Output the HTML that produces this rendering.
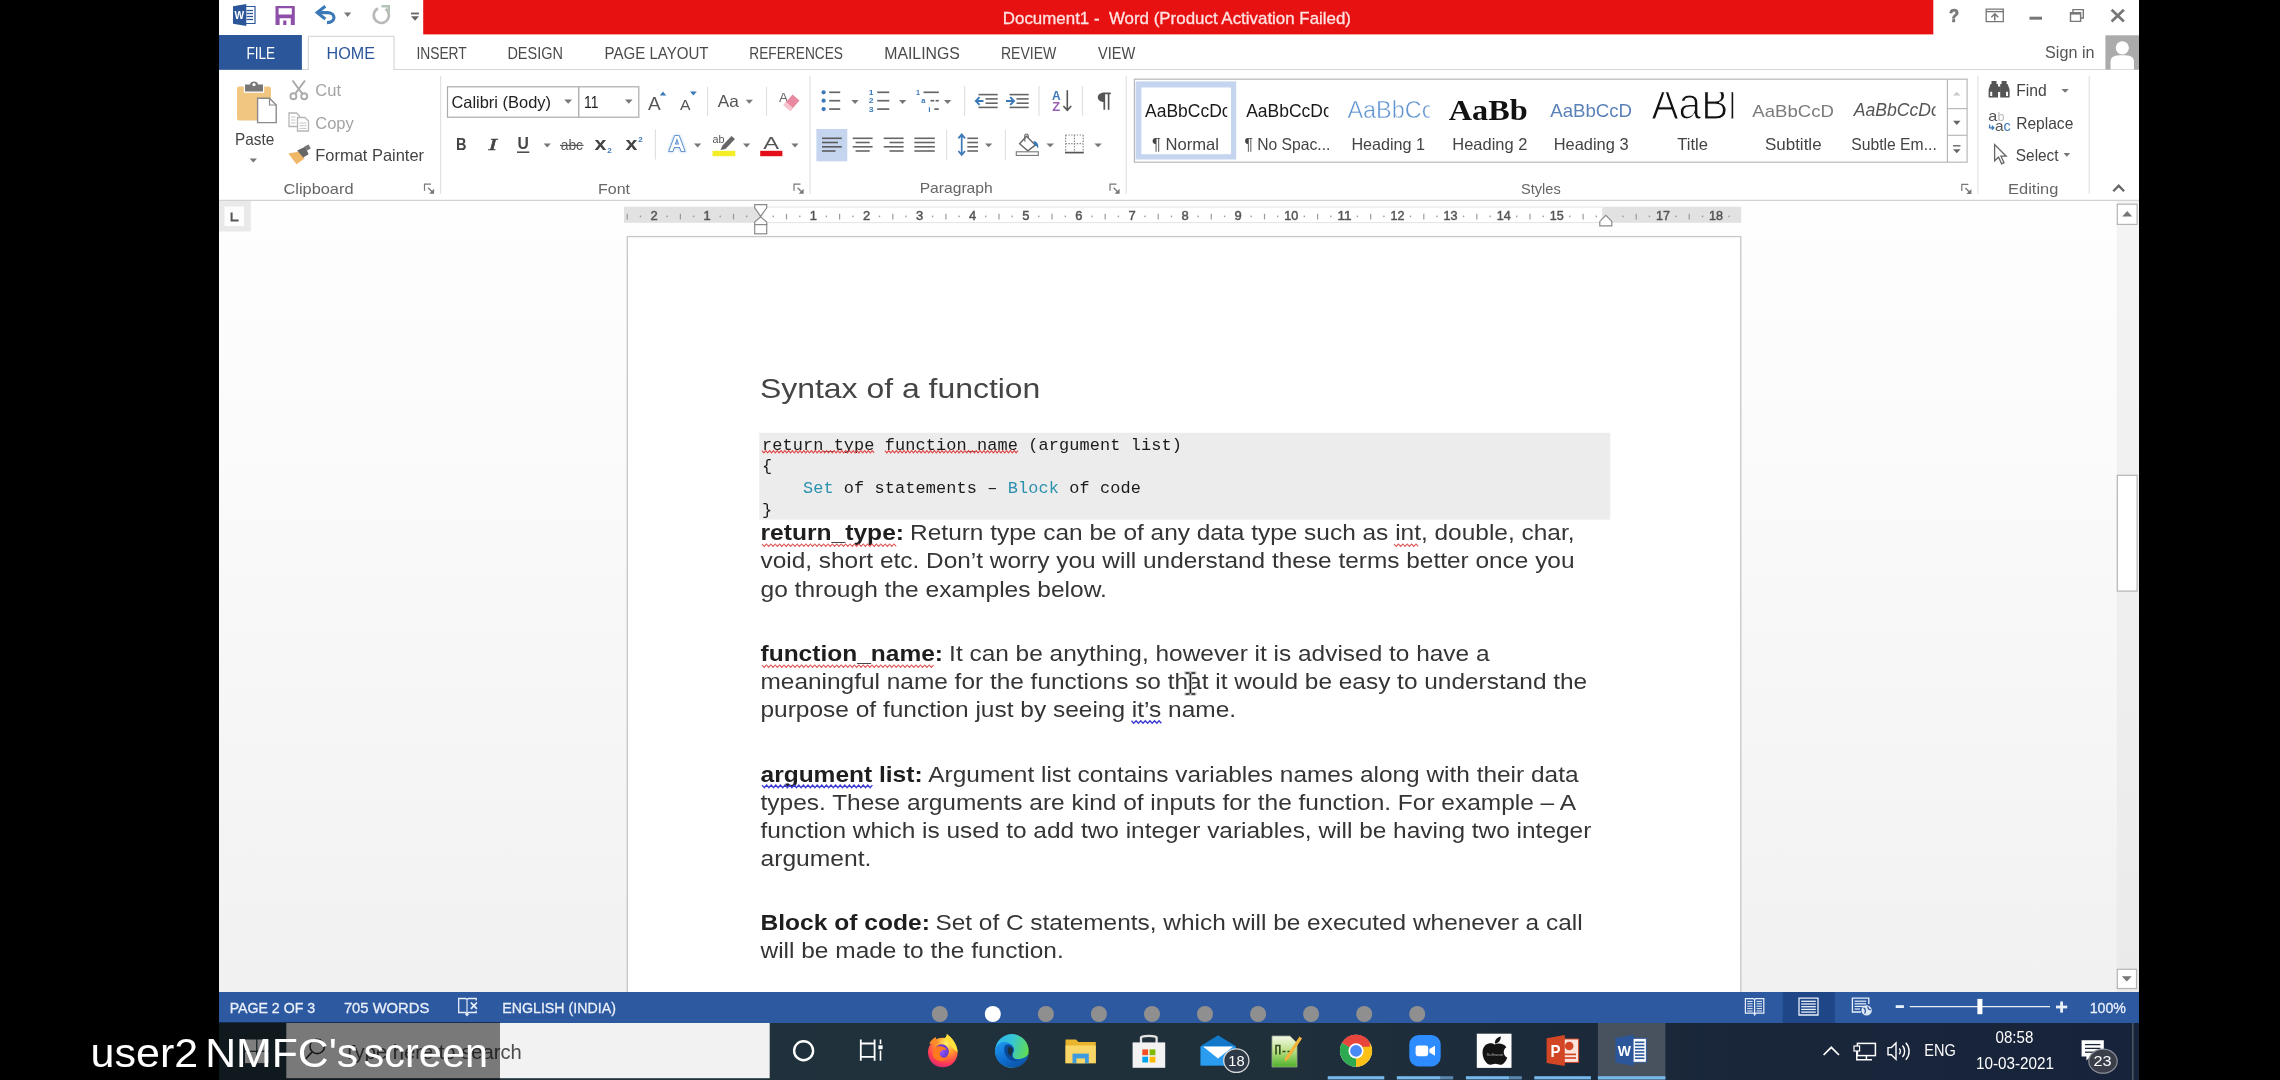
<!DOCTYPE html>
<html lang="en"><head><meta charset="utf-8"><title>Document1 - Word</title>
<style>
html,body{margin:0;padding:0;background:#000;}
body{width:2280px;height:1080px;position:relative;overflow:hidden;font-family:"Liberation Sans", sans-serif;}
.region{position:absolute;overflow:hidden;}
.region svg{display:block;position:absolute;left:0;top:0;}
svg text{font-family:"Liberation Sans", sans-serif;white-space:pre;}
</style></head><body>
<div class="region titlebar" style="left:219px;top:0px;width:1920px;height:35px;background:#fff;"><svg width="1920" height="35" viewBox="219 0 1920 35"><g opacity="0.999"><rect x="423.2" y="0.0" width="1510.1" height="34.4" fill="#e81111" />
<text x="1002.8" y="23.6" font-size="17" fill="#ffe2e2" textLength="348.2" lengthAdjust="spacingAndGlyphs" stroke="#ffe2e2" stroke-width="0.3">Document1 -  Word (Product Activation Failed)</text>
<g>
<path d="M243 6.5 H255 V23.5 H243 Z" fill="#fff" stroke="#2b579a" stroke-width="1.2" />
<line x1="246.5" y1="10.5" x2="253.0" y2="10.5" stroke="#2b579a" stroke-width="1.3" />
<line x1="246.5" y1="13.5" x2="253.0" y2="13.5" stroke="#2b579a" stroke-width="1.3" />
<line x1="246.5" y1="16.5" x2="253.0" y2="16.5" stroke="#2b579a" stroke-width="1.3" />
<line x1="246.5" y1="19.5" x2="253.0" y2="19.5" stroke="#2b579a" stroke-width="1.3" />
<path d="M233 6.3 L246.3 4 V26 L233 23.7 Z" fill="#2b579a" />
<text x="234.6" y="19.3" font-size="10.5" fill="#fff" textLength="9.6" lengthAdjust="spacingAndGlyphs" font-weight="bold">W</text>
</g>
<path d="M275.5 6 H294.8 V25 H275.5 Z M278.6 8.2 V14.6 H291.8 V8.2 Z M279.6 18.3 V25 H290.8 V18.3 Z M283.2 20.6 H286.4 V25 H283.2 Z" fill="#8e4fa8" fill-rule="evenodd"/>
<path d="M325.3 6.2 L317.2 12.6 L325.3 19" fill="none" stroke="#3b78b8" stroke-width="3.1" stroke-linejoin="miter"/>
<path d="M318.5 12.6 H327.5 C336 12.6 336.5 22.5 327 22.6" fill="none" stroke="#3b78b8" stroke-width="3.1" />
<polygon points="344.0,12.5 351.2,12.5 347.6,16.9" fill="#777"/>
<path d="M378 8.5 A7.6 7.6 0 1 0 385.5 9" fill="none" stroke="#b9b9b9" stroke-width="2.6" />
<path d="M381.5 6.3 H388.7 V13.8" fill="none" stroke="#b3c4b6" stroke-width="2.6" />
<rect x="411.0" y="12.6" width="8.0" height="1.8" fill="#666" />
<polygon points="411.0,16.2 419.0,16.2 415.0,20.7" fill="#666"/>
<text x="1949.0" y="22.2" font-size="18.5" fill="#777" textLength="10.1" lengthAdjust="spacingAndGlyphs" font-weight="bold" stroke="#777" stroke-width="0.7">?</text>
<path d="M1986.2 9.2 H2003.3 V21.6 H1986.2 Z" fill="none" stroke="#777" stroke-width="1.3" />
<line x1="1986.2" y1="11.6" x2="2003.3" y2="11.6" stroke="#777" stroke-width="1.4" />
<path d="M1994.8 20.5 V14.4 M1991.3 17.2 L1994.8 13.9 L1998.3 17.2" fill="none" stroke="#777" stroke-width="1.5" />
<rect x="2029.5" y="16.7" width="12.5" height="3.0" fill="#777" />
<path d="M2073 12 V9.6 H2083.3 V18 H2080.8" fill="none" stroke="#777" stroke-width="1.4" />
<path d="M2070.5 12.6 H2080.6 V21.4 H2070.5 Z" fill="none" stroke="#777" stroke-width="1.4" />
<line x1="2070.5" y1="13.6" x2="2080.6" y2="13.6" stroke="#777" stroke-width="2" />
<path d="M2111.6 9.8 L2123.9 21.4 M2123.9 9.8 L2111.6 21.4" fill="none" stroke="#777" stroke-width="2.7" /></g></svg></div>
<div class="region tabs" style="left:219px;top:35px;width:1920px;height:35px;background:#fff;"><svg width="1920" height="35" viewBox="219 35 1920 35"><g opacity="0.999"><line x1="219.0" y1="69.5" x2="2139.0" y2="69.5" stroke="#d6d6d6" stroke-width="1" />
<rect x="219.0" y="35.0" width="82.9" height="34.8" fill="#2b579a" />
<text x="246.4" y="58.7" font-size="17" fill="#fff" textLength="28.6" lengthAdjust="spacingAndGlyphs">FILE</text>
<path d="M308.3 70.5 V36.3 H394 V70.5" fill="#fff" stroke="#d0d0d0" stroke-width="1" />
<text x="326.5" y="58.7" font-size="17" fill="#2b579a" textLength="48.5" lengthAdjust="spacingAndGlyphs">HOME</text>
<text x="416.4" y="58.7" font-size="17" fill="#4a4a4a" textLength="50.4" lengthAdjust="spacingAndGlyphs">INSERT</text>
<text x="507.4" y="58.7" font-size="17" fill="#4a4a4a" textLength="55.5" lengthAdjust="spacingAndGlyphs">DESIGN</text>
<text x="604.5" y="58.7" font-size="17" fill="#4a4a4a" textLength="104.0" lengthAdjust="spacingAndGlyphs">PAGE LAYOUT</text>
<text x="749.3" y="58.7" font-size="17" fill="#4a4a4a" textLength="93.7" lengthAdjust="spacingAndGlyphs">REFERENCES</text>
<text x="884.2" y="58.7" font-size="17" fill="#4a4a4a" textLength="75.7" lengthAdjust="spacingAndGlyphs">MAILINGS</text>
<text x="1000.9" y="58.7" font-size="17" fill="#4a4a4a" textLength="55.5" lengthAdjust="spacingAndGlyphs">REVIEW</text>
<text x="1098.0" y="58.7" font-size="17" fill="#4a4a4a" textLength="37.3" lengthAdjust="spacingAndGlyphs">VIEW</text>
<text x="2045.1" y="57.5" font-size="17" fill="#555" textLength="49.4" lengthAdjust="spacingAndGlyphs">Sign in</text>
<rect x="2105.4" y="35.3" width="33.6" height="34.3" fill="#ababab" />
<circle cx="2122.3" cy="47.8" r="6.6" fill="#fff"/>
<path d="M2110.5 69.6 V62 C2110.5 56 2115 55.2 2122.3 55.2 C2129.6 55.2 2134 56 2134 62 V69.6 Z" fill="#fff" /></g></svg></div>
<div class="region ribbon" style="left:219px;top:70px;width:1920px;height:131px;background:#fff;"><svg width="1920" height="131" viewBox="219 70 1920 131"><g opacity="0.999"><rect x="237.0" y="86.5" width="34.0" height="34.0" fill="#f0c680" rx="2.2"/>
<path d="M243.8 86 H264.2 V92.8 H243.8 Z" fill="#fff" />
<path d="M245 87.5 V84.5 H250 C250 80.5 258 80.5 258 84.5 H263 V91.5 H245 Z" fill="#777" />
<circle cx="254" cy="84.6" r="1.6" fill="#fff"/>
<path d="M257.6 98.3 H269.5 L276.2 105 V122.6 H257.6 Z" fill="#fff" stroke="#8a8a8a" stroke-width="1.4" />
<path d="M269.5 98.3 V105 H276.2" fill="none" stroke="#8a8a8a" stroke-width="1.2" />
<text x="235.0" y="144.6" font-size="16.5" fill="#444" textLength="39.3" lengthAdjust="spacingAndGlyphs">Paste</text>
<polygon points="249.6,158.6 257.0,158.6 253.3,162.6" fill="#777"/>
<path d="M292.5 80.5 L302.5 94 M305 80.5 L295 94" fill="none" stroke="#ababab" stroke-width="2.1" />
<circle cx="293.4" cy="96.2" r="3" fill="none" stroke="#ababab" stroke-width="1.9"/>
<circle cx="304.2" cy="96.2" r="3" fill="none" stroke="#ababab" stroke-width="1.9"/>
<text x="315.3" y="96.4" font-size="16.5" fill="#a3a3a3" textLength="25.7" lengthAdjust="spacingAndGlyphs">Cut</text>
<path d="M289 113 H296.5 L299.5 116 V126.5 H289 Z" fill="#fff" stroke="#b5b5b5" stroke-width="1.3" />
<path d="M297.5 117.5 H305 L308.5 121 V131 H297.5 Z" fill="#fff" stroke="#b5b5b5" stroke-width="1.3" />
<line x1="291.0" y1="117.0" x2="295.5" y2="117.0" stroke="#c4c4c4" stroke-width="1" />
<line x1="291.0" y1="120.0" x2="295.5" y2="120.0" stroke="#c4c4c4" stroke-width="1" />
<line x1="291.0" y1="123.0" x2="295.5" y2="123.0" stroke="#c4c4c4" stroke-width="1" />
<line x1="299.5" y1="123.0" x2="306.5" y2="123.0" stroke="#c4c4c4" stroke-width="1" />
<line x1="299.5" y1="125.7" x2="306.5" y2="125.7" stroke="#c4c4c4" stroke-width="1" />
<line x1="299.5" y1="128.4" x2="306.5" y2="128.4" stroke="#c4c4c4" stroke-width="1" />
<text x="315.3" y="129.0" font-size="16.5" fill="#a3a3a3" textLength="38.5" lengthAdjust="spacingAndGlyphs">Copy</text>
<path d="M288.3 153.6 L299.5 151.4 L304.6 158.4 L296.6 164.2 Z" fill="#efb766" />
<path d="M297.2 150.4 L305.2 146.8 L308.6 154.2 L303.2 157.6 Z" fill="#666" />
<path d="M304.4 146.6 L308.6 144.4 L310.8 148.6 L306.6 150.8 Z" fill="#777" />
<text x="315.3" y="160.8" font-size="16.5" fill="#444" textLength="108.7" lengthAdjust="spacingAndGlyphs">Format Painter</text>
<text x="283.5" y="193.6" font-size="15" fill="#666" textLength="70.0" lengthAdjust="spacingAndGlyphs">Clipboard</text>
<path d="M424.5 190.7 V184.2 H431.0" fill="none" stroke="#777" stroke-width="1.2" /><path d="M428.1 187.79999999999998 L433.1 192.79999999999998" fill="none" stroke="#777" stroke-width="1.3" /><path d="M434.1 188.79999999999998 V193.79999999999998 H429.1 Z" fill="#777" />
<line x1="440.6" y1="76.0" x2="440.6" y2="193.7" stroke="#e1e1e1" stroke-width="1.2" />
<rect x="447.5" y="86.8" width="131.3" height="30.4" fill="#fff" stroke="#ababab" stroke-width="1.2"/>
<rect x="578.8" y="86.8" width="60.0" height="30.4" fill="#fff" stroke="#ababab" stroke-width="1.2"/>
<text x="451.4" y="107.7" font-size="16.5" fill="#222" textLength="99.6" lengthAdjust="spacingAndGlyphs">Calibri (Body)</text>
<polygon points="564.2,99.6 572.1,99.6 568.2,103.8" fill="#777"/>
<text x="584.0" y="107.7" font-size="16.5" fill="#222" textLength="14.4" lengthAdjust="spacingAndGlyphs">11</text>
<polygon points="625.0,99.6 632.6,99.6 628.8,103.8" fill="#777"/>
<text x="648.0" y="109.5" font-size="19" fill="#555" textLength="12.7" lengthAdjust="spacingAndGlyphs">A</text>
<polygon points="659.8,95.4 666.2,95.4 663.0,91.4" fill="#3b78b8"/>
<text x="680.0" y="109.5" font-size="15" fill="#555" textLength="10.5" lengthAdjust="spacingAndGlyphs">A</text>
<polygon points="690.0,91.4 696.8,91.4 693.4,95.4" fill="#3b78b8"/>
<line x1="707.5" y1="86.7" x2="707.5" y2="116.0" stroke="#e1e1e1" stroke-width="1.2" />
<text x="717.7" y="106.5" font-size="16.5" fill="#555" textLength="21.1" lengthAdjust="spacingAndGlyphs">Aa</text>
<polygon points="745.8,99.8 752.9,99.8 749.3,103.8" fill="#777"/>
<line x1="766.5" y1="86.7" x2="766.5" y2="116.0" stroke="#e1e1e1" stroke-width="1.2" />
<text x="779.0" y="101.5" font-size="13.5" fill="#666" textLength="9.0" lengthAdjust="spacingAndGlyphs">A</text>
<path d="M792.5 94.5 L799.5 100.5 L790.5 111 L783.5 105 Z" fill="#e889a0" />
<path d="M783.5 105 L786.2 102 L793.2 108 L790.5 111 Z" fill="#f7c5d0" />
<text x="456.0" y="149.8" font-size="16.5" fill="#444" textLength="10.5" lengthAdjust="spacingAndGlyphs" font-weight="bold">B</text>
<text x="488.4" y="149.8" font-size="17.5" fill="#444" textLength="8.4" lengthAdjust="spacingAndGlyphs" style='font-family:"Liberation Serif", serif' font-style="italic" stroke="#444" stroke-width="0.5">I</text>
<text x="517.5" y="149.3" font-size="16" fill="#444" textLength="11.3" lengthAdjust="spacingAndGlyphs" font-weight="bold">U</text>
<line x1="517.0" y1="152.2" x2="529.3" y2="152.2" stroke="#444" stroke-width="1.5" />
<polygon points="543.7,143.6 550.8,143.6 547.2,147.4" fill="#777"/>
<text x="560.7" y="149.8" font-size="14.5" fill="#555" textLength="22.3" lengthAdjust="spacingAndGlyphs">abc</text>
<line x1="560.0" y1="145.4" x2="583.6" y2="145.4" stroke="#555" stroke-width="1.2" />
<text x="594.6" y="149.8" font-size="18" fill="#444" textLength="11.9" lengthAdjust="spacingAndGlyphs" font-weight="bold">x</text>
<text x="607.3" y="153.4" font-size="8" fill="#3b78b8" textLength="4.5" lengthAdjust="spacingAndGlyphs" font-weight="bold">2</text>
<text x="625.6" y="149.8" font-size="18" fill="#444" textLength="11.9" lengthAdjust="spacingAndGlyphs" font-weight="bold">x</text>
<text x="638.3" y="142.3" font-size="8" fill="#3b78b8" textLength="4.5" lengthAdjust="spacingAndGlyphs" font-weight="bold">2</text>
<line x1="655.4" y1="129.6" x2="655.4" y2="159.5" stroke="#e1e1e1" stroke-width="1.2" />
<text x="668.8" y="151.3" font-size="22.5" fill="#fff" textLength="16.4" lengthAdjust="spacingAndGlyphs" font-weight="bold" stroke="#4a86c8" stroke-width="1.6" paint-order="stroke" style="filter:drop-shadow(0 0 1.5px #9cc0ea)">A</text>
<polygon points="694.0,143.6 701.2,143.6 697.6,147.4" fill="#777"/>
<text x="712.5" y="143.2" font-size="11.5" fill="#555" textLength="12.0" lengthAdjust="spacingAndGlyphs">ab</text>
<path d="M731.5 136 L735 139 L725.5 149 L720.5 150 L722.5 145.5 Z" fill="#666" />
<rect x="712.5" y="150.8" width="22.8" height="5.4" fill="#f4ee29" />
<polygon points="743.0,143.6 750.2,143.6 746.6,147.4" fill="#777"/>
<text x="763.2" y="149.0" font-size="17" fill="#555" textLength="15.8" lengthAdjust="spacingAndGlyphs">A</text>
<rect x="760.2" y="150.8" width="22.2" height="5.4" fill="#e3101a" />
<polygon points="791.4,143.6 798.5,143.6 795.0,147.4" fill="#777"/>
<text x="598.0" y="193.6" font-size="15" fill="#666" textLength="32.0" lengthAdjust="spacingAndGlyphs">Font</text>
<path d="M794 190.7 V184.2 H800.5" fill="none" stroke="#777" stroke-width="1.2" /><path d="M797.6 187.79999999999998 L802.6 192.79999999999998" fill="none" stroke="#777" stroke-width="1.3" /><path d="M803.6 188.79999999999998 V193.79999999999998 H798.6 Z" fill="#777" />
<line x1="810.0" y1="76.0" x2="810.0" y2="193.7" stroke="#e1e1e1" stroke-width="1.2" />
<circle cx="823.6" cy="92.3" r="2.1" fill="#3b78b8"/>
<line x1="829.2" y1="92.3" x2="840.2" y2="92.3" stroke="#666" stroke-width="1.7" />
<circle cx="823.6" cy="100.7" r="2.1" fill="#3b78b8"/>
<line x1="829.2" y1="100.7" x2="840.2" y2="100.7" stroke="#666" stroke-width="1.7" />
<circle cx="823.6" cy="109.1" r="2.1" fill="#3b78b8"/>
<line x1="829.2" y1="109.1" x2="840.2" y2="109.1" stroke="#666" stroke-width="1.7" />
<polygon points="851.4,100.0 858.7,100.0 855.0,103.9" fill="#777"/>
<text x="868.8" y="95.0" font-size="7.5" fill="#3b78b8" textLength="4.8" lengthAdjust="spacingAndGlyphs" font-weight="bold">1</text>
<line x1="877.2" y1="92.3" x2="889.3" y2="92.3" stroke="#666" stroke-width="1.7" />
<text x="868.8" y="103.4" font-size="7.5" fill="#3b78b8" textLength="4.8" lengthAdjust="spacingAndGlyphs" font-weight="bold">2</text>
<line x1="877.2" y1="100.7" x2="889.3" y2="100.7" stroke="#666" stroke-width="1.7" />
<text x="868.8" y="111.8" font-size="7.5" fill="#3b78b8" textLength="4.8" lengthAdjust="spacingAndGlyphs" font-weight="bold">3</text>
<line x1="877.2" y1="109.1" x2="889.3" y2="109.1" stroke="#666" stroke-width="1.7" />
<polygon points="899.0,100.0 906.3,100.0 902.6,103.9" fill="#777"/>
<text x="916.0" y="95.0" font-size="7.5" fill="#3b78b8" textLength="4.0" lengthAdjust="spacingAndGlyphs" font-weight="bold">1</text>
<line x1="923.5" y1="92.3" x2="938.8" y2="92.3" stroke="#666" stroke-width="1.7" />
<text x="921.3" y="103.2" font-size="7.5" fill="#3b78b8" textLength="4.2" lengthAdjust="spacingAndGlyphs" font-weight="bold">a</text>
<line x1="930.5" y1="100.7" x2="934.2" y2="100.7" stroke="#666" stroke-width="1.7" />
<line x1="935.6" y1="100.7" x2="938.8" y2="100.7" stroke="#666" stroke-width="1.7" />
<text x="928.2" y="111.8" font-size="7.5" fill="#3b78b8" textLength="2.4" lengthAdjust="spacingAndGlyphs" font-weight="bold">i</text>
<line x1="934.3" y1="109.1" x2="938.8" y2="109.1" stroke="#666" stroke-width="1.7" />
<polygon points="944.0,100.0 951.3,100.0 947.6,103.9" fill="#777"/>
<line x1="964.6" y1="86.0" x2="964.6" y2="115.7" stroke="#e1e1e1" stroke-width="1.2" />
<line x1="978.5" y1="94.6" x2="997.7" y2="94.6" stroke="#666" stroke-width="1.6" />
<line x1="985.5" y1="98.9" x2="997.7" y2="98.9" stroke="#666" stroke-width="1.6" />
<line x1="985.5" y1="103.2" x2="997.7" y2="103.2" stroke="#666" stroke-width="1.6" />
<line x1="978.5" y1="107.4" x2="997.7" y2="107.4" stroke="#666" stroke-width="1.6" />
<path d="M983.5 101 H976.2 M979.6 97.2 L975.8 101 L979.6 104.8" fill="none" stroke="#3b78b8" stroke-width="1.9" />
<line x1="1009.5" y1="94.6" x2="1028.7" y2="94.6" stroke="#666" stroke-width="1.6" />
<line x1="1016.5" y1="98.9" x2="1028.7" y2="98.9" stroke="#666" stroke-width="1.6" />
<line x1="1016.5" y1="103.2" x2="1028.7" y2="103.2" stroke="#666" stroke-width="1.6" />
<line x1="1009.5" y1="107.4" x2="1028.7" y2="107.4" stroke="#666" stroke-width="1.6" />
<path d="M1006 101 H1013.5 M1010.2 97.2 L1014 101 L1010.2 104.8" fill="none" stroke="#3b78b8" stroke-width="1.9" />
<line x1="1039.0" y1="86.0" x2="1039.0" y2="115.7" stroke="#e1e1e1" stroke-width="1.2" />
<text x="1052.0" y="99.6" font-size="12.5" fill="#3b78b8" textLength="8.6" lengthAdjust="spacingAndGlyphs" font-weight="bold">A</text>
<text x="1052.3" y="110.6" font-size="12" fill="#9a5fb0" textLength="7.9" lengthAdjust="spacingAndGlyphs" font-weight="bold">Z</text>
<path d="M1067.3 90.2 V110 M1063.4 106 L1067.3 110.3 L1071.2 106" fill="none" stroke="#555" stroke-width="1.6" />
<line x1="1082.5" y1="86.0" x2="1082.5" y2="115.7" stroke="#e1e1e1" stroke-width="1.2" />
<path d="M1104.2 93.3 H1110.8 M1104.3 93.3 V109.8 M1108.6 93.3 V109.8" fill="none" stroke="#555" stroke-width="1.7" />
<path d="M1104.6 92.5 C1095.5 92.3 1095.5 102.3 1104.6 102 Z" fill="#555" />
<rect x="816.4" y="129.0" width="30.9" height="32.3" fill="#c5d5f0" />
<line x1="822.0" y1="138.3" x2="841.8" y2="138.3" stroke="#5a5a5a" stroke-width="1.6" />
<line x1="822.0" y1="142.5" x2="838.0" y2="142.5" stroke="#5a5a5a" stroke-width="1.6" />
<line x1="822.0" y1="146.8" x2="841.8" y2="146.8" stroke="#5a5a5a" stroke-width="1.6" />
<line x1="822.0" y1="151.0" x2="835.5" y2="151.0" stroke="#5a5a5a" stroke-width="1.6" />
<line x1="852.7" y1="138.3" x2="872.6" y2="138.3" stroke="#666" stroke-width="1.6" />
<line x1="855.6" y1="142.5" x2="869.7" y2="142.5" stroke="#666" stroke-width="1.6" />
<line x1="852.7" y1="146.8" x2="872.6" y2="146.8" stroke="#666" stroke-width="1.6" />
<line x1="855.6" y1="151.0" x2="869.7" y2="151.0" stroke="#666" stroke-width="1.6" />
<line x1="883.7" y1="138.3" x2="903.6" y2="138.3" stroke="#666" stroke-width="1.6" />
<line x1="889.5" y1="142.5" x2="903.6" y2="142.5" stroke="#666" stroke-width="1.6" />
<line x1="883.7" y1="146.8" x2="903.6" y2="146.8" stroke="#666" stroke-width="1.6" />
<line x1="889.5" y1="151.0" x2="903.6" y2="151.0" stroke="#666" stroke-width="1.6" />
<line x1="914.4" y1="138.3" x2="934.8" y2="138.3" stroke="#666" stroke-width="1.6" />
<line x1="914.4" y1="142.5" x2="934.8" y2="142.5" stroke="#666" stroke-width="1.6" />
<line x1="914.4" y1="146.8" x2="934.8" y2="146.8" stroke="#666" stroke-width="1.6" />
<line x1="914.4" y1="151.0" x2="934.8" y2="151.0" stroke="#666" stroke-width="1.6" />
<line x1="946.6" y1="129.9" x2="946.6" y2="159.8" stroke="#e1e1e1" stroke-width="1.2" />
<path d="M961.7 134.6 V154.8 M958.4 138.4 L961.7 134.4 L965 138.4 M958.4 151 L961.7 155 L965 151" fill="none" stroke="#3b78b8" stroke-width="1.7" />
<line x1="967.3" y1="138.3" x2="978.0" y2="138.3" stroke="#666" stroke-width="1.6" />
<line x1="967.3" y1="142.5" x2="978.0" y2="142.5" stroke="#666" stroke-width="1.6" />
<line x1="967.3" y1="146.8" x2="978.0" y2="146.8" stroke="#666" stroke-width="1.6" />
<line x1="967.3" y1="151.0" x2="978.0" y2="151.0" stroke="#666" stroke-width="1.6" />
<polygon points="985.0,143.4 992.3,143.4 988.6,147.2" fill="#777"/>
<line x1="1005.4" y1="129.9" x2="1005.4" y2="159.8" stroke="#e1e1e1" stroke-width="1.2" />
<path d="M1026.5 136.3 L1035.3 145.1 L1027.8 150.8 L1019.6 143.8 Z" fill="#fff" stroke="#666" stroke-width="1.4" />
<path d="M1024.8 141.5 V135.8 C1024.8 133.4 1028.2 133.4 1028.2 135.8 V138" fill="none" stroke="#666" stroke-width="1.2" />
<path d="M1033.5 141 C1037.8 141.5 1039 145 1038 148.6 C1037 146.4 1036 145.4 1034.2 145 Z" fill="#3b78b8" />
<rect x="1016.3" y="151.8" width="22.0" height="3.6" fill="#fff" stroke="#777" stroke-width="1.1"/>
<polygon points="1046.4,143.4 1054.0,143.4 1050.2,147.2" fill="#777"/>
<path d="M1065.6 135 H1083.2 M1065.6 135 V152 M1083.2 135 V152 M1074.4 135 V152 M1065.6 143.7 H1083.2" fill="none" stroke="#888" stroke-width="1.2" stroke-dasharray="1.4 1.4"/>
<line x1="1065.0" y1="152.6" x2="1083.8" y2="152.6" stroke="#555" stroke-width="1.7" />
<polygon points="1094.4,143.4 1101.8,143.4 1098.1,147.2" fill="#777"/>
<text x="919.7" y="193.4" font-size="15" fill="#666" textLength="73.0" lengthAdjust="spacingAndGlyphs">Paragraph</text>
<path d="M1110 190.7 V184.2 H1116.5" fill="none" stroke="#777" stroke-width="1.2" /><path d="M1113.6 187.79999999999998 L1118.6 192.79999999999998" fill="none" stroke="#777" stroke-width="1.3" /><path d="M1119.6 188.79999999999998 V193.79999999999998 H1114.6 Z" fill="#777" />
<line x1="1126.2" y1="76.0" x2="1126.2" y2="193.7" stroke="#e1e1e1" stroke-width="1.2" />
<rect x="1134.4" y="79.2" width="832.7" height="83.0" fill="#fff" stroke="#b8b8b8" stroke-width="1.2"/>
<rect x="1135.6" y="81.4" width="100.6" height="78.1" fill="#c5d5f0" />
<rect x="1141.4" y="87.5" width="89.6" height="66.7" fill="#fff" />
<clipPath id="c1"><rect x="1141" y="88" width="86.2" height="40"/></clipPath>
<text x="1145.0" y="116.5" font-size="17.5" fill="#1a1a1a" textLength="85.5" lengthAdjust="spacingAndGlyphs" clip-path="url(#c1)">AaBbCcDc</text>
<text x="1152.0" y="149.8" font-size="16.5" fill="#444" textLength="67.0" lengthAdjust="spacingAndGlyphs">¶ Normal</text>
<clipPath id="c2"><rect x="1240" y="88" width="88.4" height="40"/></clipPath>
<text x="1246.2" y="116.5" font-size="17.5" fill="#1a1a1a" textLength="85.5" lengthAdjust="spacingAndGlyphs" clip-path="url(#c2)">AaBbCcDc</text>
<text x="1244.4" y="149.8" font-size="16.5" fill="#444" textLength="86.0" lengthAdjust="spacingAndGlyphs">¶ No Spac...</text>
<clipPath id="c3"><rect x="1340" y="88" width="89.4" height="40"/></clipPath>
<text x="1347.4" y="118.2" font-size="23" fill="#5f93cf" textLength="86.0" lengthAdjust="spacingAndGlyphs" clip-path="url(#c3)" stroke="#fff" stroke-width="0.5">AaBbCc</text>
<text x="1351.4" y="149.8" font-size="16.5" fill="#444" textLength="73.7" lengthAdjust="spacingAndGlyphs">Heading 1</text>
<text x="1448.8" y="120.0" font-size="29" fill="#111" textLength="78.9" lengthAdjust="spacingAndGlyphs" font-weight="bold" style='font-family:"Liberation Serif", serif'>AaBb</text>
<text x="1452.3" y="149.8" font-size="16.5" fill="#444" textLength="75.1" lengthAdjust="spacingAndGlyphs">Heading 2</text>
<text x="1550.2" y="116.5" font-size="18.4" fill="#5a82b8" textLength="81.9" lengthAdjust="spacingAndGlyphs">AaBbCcD</text>
<text x="1553.7" y="149.8" font-size="16.5" fill="#444" textLength="74.9" lengthAdjust="spacingAndGlyphs">Heading 3</text>
<clipPath id="c4"><rect x="1645" y="92.3" width="88.2" height="40"/></clipPath>
<text x="1651.4" y="118.8" font-size="43.5" fill="#111" textLength="99.5" lengthAdjust="spacingAndGlyphs" clip-path="url(#c4)" stroke="#fff" stroke-width="1.2">AaBb</text>
<text x="1677.2" y="149.8" font-size="16.5" fill="#444" textLength="30.7" lengthAdjust="spacingAndGlyphs">Title</text>
<text x="1752.3" y="116.5" font-size="17" fill="#7a7a7a" textLength="81.6" lengthAdjust="spacingAndGlyphs">AaBbCcD</text>
<text x="1764.9" y="149.8" font-size="16.5" fill="#444" textLength="56.7" lengthAdjust="spacingAndGlyphs">Subtitle</text>
<clipPath id="c5"><rect x="1845" y="88" width="90.6" height="40"/></clipPath>
<text x="1853.7" y="115.6" font-size="17.5" fill="#555" textLength="86.0" lengthAdjust="spacingAndGlyphs" font-style="italic" clip-path="url(#c5)">AaBbCcDc</text>
<text x="1851.2" y="150.0" font-size="16.5" fill="#444" textLength="85.6" lengthAdjust="spacingAndGlyphs">Subtle Em...</text>
<line x1="1947.4" y1="79.2" x2="1947.4" y2="162.2" stroke="#b8b8b8" stroke-width="1.2" />
<line x1="1947.4" y1="108.6" x2="1967.1" y2="108.6" stroke="#b8b8b8" stroke-width="1.2" />
<line x1="1947.4" y1="135.3" x2="1967.1" y2="135.3" stroke="#b8b8b8" stroke-width="1.2" />
<polygon points="1953.0,95.6 1960.5,95.6 1956.8,91.8" fill="#c8c8c8"/>
<polygon points="1953.0,120.8 1960.5,120.8 1956.8,125.0" fill="#666"/>
<line x1="1953.0" y1="145.8" x2="1960.5" y2="145.8" stroke="#666" stroke-width="1.4" />
<polygon points="1953.0,149.3 1960.5,149.3 1956.8,153.2" fill="#666"/>
<text x="1521.0" y="193.6" font-size="15" fill="#666" textLength="39.7" lengthAdjust="spacingAndGlyphs">Styles</text>
<path d="M1961.8 190.9 V184.4 H1968.3" fill="none" stroke="#777" stroke-width="1.2" /><path d="M1965.3999999999999 188.0 L1970.3999999999999 193.0" fill="none" stroke="#777" stroke-width="1.3" /><path d="M1971.3999999999999 189.0 V194.0 H1966.3999999999999 Z" fill="#777" />
<line x1="1977.9" y1="76.0" x2="1977.9" y2="193.7" stroke="#e1e1e1" stroke-width="1.2" />
<path d="M1991.5 81 H1996.5 V84 H1998 V97.6 H1988.6 V89.5 L1990.5 84 H1991.5 Z" fill="#555" />
<path d="M2001.6 81 H2006.6 V84 H2007.6 L2009.6 89.5 V97.6 H2000.2 V84 H2001.6 Z" fill="#555" />
<rect x="1997.5" y="86.5" width="3.2" height="5.5" fill="#555" />
<rect x="1990.2" y="91.8" width="2.0" height="4.2" fill="#fff" />
<rect x="2006.0" y="91.8" width="2.0" height="4.2" fill="#fff" />
<text x="2016.2" y="96.4" font-size="16.5" fill="#444" textLength="30.5" lengthAdjust="spacingAndGlyphs">Find</text>
<polygon points="2061.4,89.0 2068.8,89.0 2065.1,92.8" fill="#777"/>
<text x="1988.3" y="120.6" font-size="14.5" fill="#555" textLength="9.0" lengthAdjust="spacingAndGlyphs">a</text>
<text x="1997.5" y="120.6" font-size="13.5" fill="#bbb" textLength="7.0" lengthAdjust="spacingAndGlyphs">b</text>
<text x="1995.0" y="131.3" font-size="14.5" fill="#555" textLength="8.6" lengthAdjust="spacingAndGlyphs">a</text>
<text x="2003.6" y="131.3" font-size="14.5" fill="#3b78b8" textLength="7.2" lengthAdjust="spacingAndGlyphs">c</text>
<path d="M1989.6 124.5 V127.8 H1993.4 M1991.8 125.8 L1993.8 127.8 L1991.8 129.8" fill="none" stroke="#3b78b8" stroke-width="1.3" />
<text x="2016.2" y="128.7" font-size="16.5" fill="#444" textLength="57.1" lengthAdjust="spacingAndGlyphs">Replace</text>
<path d="M1994.6 144.6 V160.8 L1998.6 157.2 L2001.6 163.8 L2004 162.6 L2001 156.2 H2006.2 Z" fill="#fff" stroke="#666" stroke-width="1.3" />
<text x="2015.8" y="161.0" font-size="16.5" fill="#444" textLength="42.8" lengthAdjust="spacingAndGlyphs">Select</text>
<polygon points="2063.5,153.1 2070.2,153.1 2066.8,156.8" fill="#777"/>
<text x="2008.1" y="193.5" font-size="15" fill="#666" textLength="50.2" lengthAdjust="spacingAndGlyphs">Editing</text>
<line x1="2089.2" y1="76.0" x2="2089.2" y2="193.7" stroke="#e1e1e1" stroke-width="1.2" />
<path d="M2113.3 191.2 L2118.7 185.6 L2124.1 191.2" fill="none" stroke="#666" stroke-width="2.3" />
<line x1="219.0" y1="200.4" x2="2139.0" y2="200.4" stroke="#d2d2d2" stroke-width="1.2" /></g></svg></div>
<div class="region docarea" style="left:219px;top:201px;width:1920px;height:791px;background:linear-gradient(#fefefe 0%,#fbfbfb 30%,#f6f6f6 65%,#f1f1f1 100%);"><svg width="1920" height="791" viewBox="219 201 1920 791"><g opacity="0.999"><rect x="627.3" y="236.6" width="1113.5" height="760.0" fill="#fff" stroke="#c6c6c6" stroke-width="1.3"/>
<text x="759.9" y="398.4" font-size="27.5" fill="#454545" textLength="280.5" lengthAdjust="spacingAndGlyphs">Syntax of a function</text>
<rect x="759.3" y="432.8" width="851.0" height="86.8" fill="#ececec" />
<text x="761.9" y="449.9" font-size="16.9" fill="#1a1a1a" textLength="420.0" lengthAdjust="spacing" style='font-family:"Liberation Mono", monospace'>return_type function_name (argument list)</text>
<text x="761.9" y="471.4" font-size="16.9" fill="#1a1a1a" textLength="10.2" lengthAdjust="spacing" style='font-family:"Liberation Mono", monospace'>{</text>
<text x="802.9" y="492.8" font-size="16.9" fill="#2b91af" textLength="30.7" lengthAdjust="spacing" style='font-family:"Liberation Mono", monospace'>Set</text>
<text x="843.8" y="492.8" font-size="16.9" fill="#1a1a1a" textLength="163.9" lengthAdjust="spacing" style='font-family:"Liberation Mono", monospace'>of statements – </text>
<text x="1007.7" y="492.8" font-size="16.9" fill="#2b91af" textLength="51.2" lengthAdjust="spacing" style='font-family:"Liberation Mono", monospace'>Block</text>
<text x="1069.2" y="492.8" font-size="16.9" fill="#1a1a1a" textLength="71.7" lengthAdjust="spacing" style='font-family:"Liberation Mono", monospace'>of code</text>
<text x="761.9" y="514.5" font-size="16.9" fill="#1a1a1a" textLength="10.2" lengthAdjust="spacing" style='font-family:"Liberation Mono", monospace'>}</text>
<polyline points="762.0,450.7 763.9,452.9 765.8,450.7 767.7,452.9 769.6,450.7 771.5,452.9 773.4,450.7 775.3,452.9 777.2,450.7 779.1,452.9 781.0,450.7 782.9,452.9 784.8,450.7 786.7,452.9 788.6,450.7 790.5,452.9 792.4,450.7 794.3,452.9 796.2,450.7 798.1,452.9 800.0,450.7 801.9,452.9 803.8,450.7 805.7,452.9 807.6,450.7 809.5,452.9 811.4,450.7 813.3,452.9 815.2,450.7 817.1,452.9 819.0,450.7 820.9,452.9 822.8,450.7 824.7,452.9 826.6,450.7 828.5,452.9 830.4,450.7 832.3,452.9 834.2,450.7 836.1,452.9 838.0,450.7 839.9,452.9 841.8,450.7 843.7,452.9 845.6,450.7 847.5,452.9 849.4,450.7 851.3,452.9 853.2,450.7 855.1,452.9 857.0,450.7 858.9,452.9 860.8,450.7 862.7,452.9 864.6,450.7 866.5,452.9 868.4,450.7 870.3,452.9 872.2,450.7 874.1,452.9" fill="none" stroke="#e04545" stroke-width="1.1"/>
<polyline points="885.0,450.7 886.9,452.9 888.8,450.7 890.7,452.9 892.6,450.7 894.5,452.9 896.4,450.7 898.3,452.9 900.2,450.7 902.1,452.9 904.0,450.7 905.9,452.9 907.8,450.7 909.7,452.9 911.6,450.7 913.5,452.9 915.4,450.7 917.3,452.9 919.2,450.7 921.1,452.9 923.0,450.7 924.9,452.9 926.8,450.7 928.7,452.9 930.6,450.7 932.5,452.9 934.4,450.7 936.3,452.9 938.2,450.7 940.1,452.9 942.0,450.7 943.9,452.9 945.8,450.7 947.7,452.9 949.6,450.7 951.5,452.9 953.4,450.7 955.3,452.9 957.2,450.7 959.1,452.9 961.0,450.7 962.9,452.9 964.8,450.7 966.7,452.9 968.6,450.7 970.5,452.9 972.4,450.7 974.3,452.9 976.2,450.7 978.1,452.9 980.0,450.7 981.9,452.9 983.8,450.7 985.7,452.9 987.6,450.7 989.5,452.9 991.4,450.7 993.3,452.9 995.2,450.7 997.1,452.9 999.0,450.7 1000.9,452.9 1002.8,450.7 1004.7,452.9 1006.6,450.7 1008.5,452.9 1010.4,450.7 1012.3,452.9 1014.2,450.7 1016.1,452.9 1018.0,450.7" fill="none" stroke="#e04545" stroke-width="1.1"/>
<text x="760.5" y="540.3" font-size="22.3" fill="#1e1e1e" textLength="143.5" lengthAdjust="spacingAndGlyphs" font-weight="bold">return_type:</text>
<text x="910.1" y="540.3" font-size="22.3" fill="#353535" textLength="664.4" lengthAdjust="spacingAndGlyphs">Return type can be of any data type such as int, double, char,</text>
<text x="760.5" y="568.4" font-size="22.3" fill="#353535" textLength="814.0" lengthAdjust="spacingAndGlyphs">void, short etc. Don’t worry you will understand these terms better once you</text>
<text x="760.5" y="596.5" font-size="22.3" fill="#353535" textLength="346.4" lengthAdjust="spacingAndGlyphs">go through the examples below.</text>
<text x="760.5" y="660.5" font-size="22.3" fill="#1e1e1e" textLength="182.5" lengthAdjust="spacingAndGlyphs" font-weight="bold">function_name:</text>
<text x="949.1" y="660.5" font-size="22.3" fill="#353535" textLength="540.4" lengthAdjust="spacingAndGlyphs">It can be anything, however it is advised to have a</text>
<text x="760.5" y="688.9" font-size="22.3" fill="#353535" textLength="826.7" lengthAdjust="spacingAndGlyphs">meaningful name for the functions so that it would be easy to understand the</text>
<text x="760.5" y="717.1" font-size="22.3" fill="#353535" textLength="475.6" lengthAdjust="spacingAndGlyphs">purpose of function just by seeing it’s name.</text>
<text x="760.5" y="781.9" font-size="22.3" fill="#1e1e1e" textLength="162.1" lengthAdjust="spacingAndGlyphs" font-weight="bold">argument list:</text>
<text x="928.3" y="781.9" font-size="22.3" fill="#353535" textLength="650.2" lengthAdjust="spacingAndGlyphs">Argument list contains variables names along with their data</text>
<text x="760.5" y="809.9" font-size="22.3" fill="#353535" textLength="815.5" lengthAdjust="spacingAndGlyphs">types. These arguments are kind of inputs for the function. For example – A</text>
<text x="760.5" y="837.9" font-size="22.3" fill="#353535" textLength="830.8" lengthAdjust="spacingAndGlyphs">function which is used to add two integer variables, will be having two integer</text>
<text x="760.5" y="865.9" font-size="22.3" fill="#353535" textLength="110.8" lengthAdjust="spacingAndGlyphs">argument.</text>
<text x="760.5" y="929.8" font-size="22.3" fill="#1e1e1e" textLength="169.4" lengthAdjust="spacingAndGlyphs" font-weight="bold">Block of code:</text>
<text x="935.4" y="929.8" font-size="22.3" fill="#353535" textLength="647.2" lengthAdjust="spacingAndGlyphs">Set of C statements, which will be executed whenever a call</text>
<text x="760.5" y="957.8" font-size="22.3" fill="#353535" textLength="303.2" lengthAdjust="spacingAndGlyphs">will be made to the function.</text>
<polyline points="762.0,544.0 764.2,546.4 766.4,544.0 768.6,546.4 770.8,544.0 773.0,546.4 775.2,544.0 777.4,546.4 779.6,544.0 781.8,546.4 784.0,544.0 786.2,546.4 788.4,544.0 790.6,546.4 792.8,544.0 795.0,546.4 797.2,544.0 799.4,546.4 801.6,544.0 803.8,546.4 806.0,544.0 808.2,546.4 810.4,544.0 812.6,546.4 814.8,544.0 817.0,546.4 819.2,544.0 821.4,546.4 823.6,544.0 825.8,546.4 828.0,544.0 830.2,546.4 832.4,544.0 834.6,546.4 836.8,544.0 839.0,546.4 841.2,544.0 843.4,546.4 845.6,544.0 847.8,546.4 850.0,544.0 852.2,546.4 854.4,544.0 856.6,546.4 858.8,544.0 861.0,546.4 863.2,544.0 865.4,546.4 867.6,544.0 869.8,546.4 872.0,544.0 874.2,546.4 876.4,544.0 878.6,546.4 880.8,544.0 883.0,546.4 885.2,544.0 887.4,546.4 889.6,544.0 891.8,546.4 894.0,544.0 896.2,546.4" fill="none" stroke="#e05555" stroke-width="1.1"/>
<polyline points="1394.0,544.0 1396.2,546.4 1398.4,544.0 1400.6,546.4 1402.8,544.0 1405.0,546.4 1407.2,544.0 1409.4,546.4 1411.6,544.0 1413.8,546.4 1416.0,544.0 1418.2,546.4" fill="none" stroke="#e05555" stroke-width="1.1"/>
<polyline points="762.0,665.0 764.2,667.4 766.4,665.0 768.6,667.4 770.8,665.0 773.0,667.4 775.2,665.0 777.4,667.4 779.6,665.0 781.8,667.4 784.0,665.0 786.2,667.4 788.4,665.0 790.6,667.4 792.8,665.0 795.0,667.4 797.2,665.0 799.4,667.4 801.6,665.0 803.8,667.4 806.0,665.0 808.2,667.4 810.4,665.0 812.6,667.4 814.8,665.0 817.0,667.4 819.2,665.0 821.4,667.4 823.6,665.0 825.8,667.4 828.0,665.0 830.2,667.4 832.4,665.0 834.6,667.4 836.8,665.0 839.0,667.4 841.2,665.0 843.4,667.4 845.6,665.0 847.8,667.4 850.0,665.0 852.2,667.4 854.4,665.0 856.6,667.4 858.8,665.0 861.0,667.4 863.2,665.0 865.4,667.4 867.6,665.0 869.8,667.4 872.0,665.0 874.2,667.4 876.4,665.0 878.6,667.4 880.8,665.0 883.0,667.4 885.2,665.0 887.4,667.4 889.6,665.0 891.8,667.4 894.0,665.0 896.2,667.4 898.4,665.0 900.6,667.4 902.8,665.0 905.0,667.4 907.2,665.0 909.4,667.4 911.6,665.0 913.8,667.4 916.0,665.0 918.2,667.4 920.4,665.0 922.6,667.4 924.8,665.0 927.0,667.4 929.2,665.0 931.4,667.4 933.6,665.0" fill="none" stroke="#e05555" stroke-width="1.1"/>
<polyline points="1131.5,720.7 1133.8,723.3 1136.1,720.7 1138.4,723.3 1140.7,720.7 1143.0,723.3 1145.3,720.7 1147.6,723.3 1149.9,720.7 1152.2,723.3 1154.5,720.7 1156.8,723.3 1159.1,720.7 1161.4,723.3" fill="none" stroke="#3a3ad2" stroke-width="1.3"/>
<polyline points="762.0,785.1 764.3,787.7 766.6,785.1 768.9,787.7 771.2,785.1 773.5,787.7 775.8,785.1 778.1,787.7 780.4,785.1 782.7,787.7 785.0,785.1 787.3,787.7 789.6,785.1 791.9,787.7 794.2,785.1 796.5,787.7 798.8,785.1 801.1,787.7 803.4,785.1 805.7,787.7 808.0,785.1 810.3,787.7 812.6,785.1 814.9,787.7 817.2,785.1 819.5,787.7 821.8,785.1 824.1,787.7 826.4,785.1 828.7,787.7 831.0,785.1 833.3,787.7 835.6,785.1 837.9,787.7 840.2,785.1 842.5,787.7 844.8,785.1 847.1,787.7 849.4,785.1 851.7,787.7 854.0,785.1 856.3,787.7 858.6,785.1 860.9,787.7 863.2,785.1 865.5,787.7 867.8,785.1 870.1,787.7 872.4,785.1" fill="none" stroke="#3a3ad2" stroke-width="1.3"/>
<path d="M1185.6 672.9 H1189.4 M1191.4 672.9 H1195.2 M1190.4 673.4 V693.6 M1185.6 694.1 H1189.4 M1191.4 694.1 H1195.2" fill="none" stroke="#d4d4d4" stroke-width="3.6" stroke-linecap="round"/>
<path d="M1185.6 672.9 H1189.4 M1191.4 672.9 H1195.2 M1190.4 673.4 V693.6 M1185.6 694.1 H1189.4 M1191.4 694.1 H1195.2" fill="none" stroke="#1a1a1a" stroke-width="1.5" />
<rect x="219.0" y="201.0" width="31.8" height="30.5" fill="#e9e9e9" />
<rect x="224.5" y="206.5" width="19.5" height="19.5" fill="#fdfdfd" />
<path d="M231.6 212.5 V220.6 H238.6" fill="none" stroke="#555" stroke-width="2" />
<rect x="624.0" y="206.7" width="1117.2" height="16.1" fill="#fff" />
<rect x="624.0" y="206.7" width="136.9" height="16.1" fill="#e2e2e2" />
<rect x="1602.2" y="206.7" width="139.0" height="16.1" fill="#e2e2e2" />
<line x1="760.9" y1="207.0" x2="1602.2" y2="207.0" stroke="#e4e4e4" stroke-width="1" />
<line x1="760.9" y1="222.6" x2="1602.2" y2="222.6" stroke="#e4e4e4" stroke-width="1" />
<text x="650.5" y="220.2" font-size="12.5" fill="#555" textLength="7.2" lengthAdjust="spacingAndGlyphs" stroke="#555" stroke-width="0.45">2</text>
<text x="703.6" y="220.2" font-size="12.5" fill="#555" textLength="7.2" lengthAdjust="spacingAndGlyphs" stroke="#555" stroke-width="0.45">1</text>
<text x="809.8" y="220.2" font-size="12.5" fill="#555" textLength="7.2" lengthAdjust="spacingAndGlyphs" stroke="#555" stroke-width="0.45">1</text>
<text x="862.9" y="220.2" font-size="12.5" fill="#555" textLength="7.2" lengthAdjust="spacingAndGlyphs" stroke="#555" stroke-width="0.45">2</text>
<text x="916.0" y="220.2" font-size="12.5" fill="#555" textLength="7.2" lengthAdjust="spacingAndGlyphs" stroke="#555" stroke-width="0.45">3</text>
<text x="969.1" y="220.2" font-size="12.5" fill="#555" textLength="7.2" lengthAdjust="spacingAndGlyphs" stroke="#555" stroke-width="0.45">4</text>
<text x="1022.2" y="220.2" font-size="12.5" fill="#555" textLength="7.2" lengthAdjust="spacingAndGlyphs" stroke="#555" stroke-width="0.45">5</text>
<text x="1075.3" y="220.2" font-size="12.5" fill="#555" textLength="7.2" lengthAdjust="spacingAndGlyphs" stroke="#555" stroke-width="0.45">6</text>
<text x="1128.4" y="220.2" font-size="12.5" fill="#555" textLength="7.2" lengthAdjust="spacingAndGlyphs" stroke="#555" stroke-width="0.45">7</text>
<text x="1181.5" y="220.2" font-size="12.5" fill="#555" textLength="7.2" lengthAdjust="spacingAndGlyphs" stroke="#555" stroke-width="0.45">8</text>
<text x="1234.6" y="220.2" font-size="12.5" fill="#555" textLength="7.2" lengthAdjust="spacingAndGlyphs" stroke="#555" stroke-width="0.45">9</text>
<text x="1284.3" y="220.2" font-size="12.5" fill="#555" textLength="14.0" lengthAdjust="spacingAndGlyphs" stroke="#555" stroke-width="0.45">10</text>
<text x="1337.4" y="220.2" font-size="12.5" fill="#555" textLength="14.0" lengthAdjust="spacingAndGlyphs" stroke="#555" stroke-width="0.45">11</text>
<text x="1390.5" y="220.2" font-size="12.5" fill="#555" textLength="14.0" lengthAdjust="spacingAndGlyphs" stroke="#555" stroke-width="0.45">12</text>
<text x="1443.6" y="220.2" font-size="12.5" fill="#555" textLength="14.0" lengthAdjust="spacingAndGlyphs" stroke="#555" stroke-width="0.45">13</text>
<text x="1496.7" y="220.2" font-size="12.5" fill="#555" textLength="14.0" lengthAdjust="spacingAndGlyphs" stroke="#555" stroke-width="0.45">14</text>
<text x="1549.8" y="220.2" font-size="12.5" fill="#555" textLength="14.0" lengthAdjust="spacingAndGlyphs" stroke="#555" stroke-width="0.45">15</text>
<text x="1656.0" y="220.2" font-size="12.5" fill="#555" textLength="14.0" lengthAdjust="spacingAndGlyphs" stroke="#555" stroke-width="0.45">17</text>
<text x="1709.1" y="220.2" font-size="12.5" fill="#555" textLength="14.0" lengthAdjust="spacingAndGlyphs" stroke="#555" stroke-width="0.45">18</text>
<line x1="627.2" y1="213.8" x2="627.2" y2="219.4" stroke="#9a9a9a" stroke-width="1.2" />
<line x1="680.4" y1="213.8" x2="680.4" y2="219.4" stroke="#9a9a9a" stroke-width="1.2" />
<line x1="733.5" y1="213.8" x2="733.5" y2="219.4" stroke="#9a9a9a" stroke-width="1.2" />
<line x1="786.5" y1="213.8" x2="786.5" y2="219.4" stroke="#9a9a9a" stroke-width="1.2" />
<line x1="839.6" y1="213.8" x2="839.6" y2="219.4" stroke="#9a9a9a" stroke-width="1.2" />
<line x1="892.8" y1="213.8" x2="892.8" y2="219.4" stroke="#9a9a9a" stroke-width="1.2" />
<line x1="945.9" y1="213.8" x2="945.9" y2="219.4" stroke="#9a9a9a" stroke-width="1.2" />
<line x1="999.0" y1="213.8" x2="999.0" y2="219.4" stroke="#9a9a9a" stroke-width="1.2" />
<line x1="1052.0" y1="213.8" x2="1052.0" y2="219.4" stroke="#9a9a9a" stroke-width="1.2" />
<line x1="1105.2" y1="213.8" x2="1105.2" y2="219.4" stroke="#9a9a9a" stroke-width="1.2" />
<line x1="1158.2" y1="213.8" x2="1158.2" y2="219.4" stroke="#9a9a9a" stroke-width="1.2" />
<line x1="1211.3" y1="213.8" x2="1211.3" y2="219.4" stroke="#9a9a9a" stroke-width="1.2" />
<line x1="1264.5" y1="213.8" x2="1264.5" y2="219.4" stroke="#9a9a9a" stroke-width="1.2" />
<line x1="1317.6" y1="213.8" x2="1317.6" y2="219.4" stroke="#9a9a9a" stroke-width="1.2" />
<line x1="1370.7" y1="213.8" x2="1370.7" y2="219.4" stroke="#9a9a9a" stroke-width="1.2" />
<line x1="1423.8" y1="213.8" x2="1423.8" y2="219.4" stroke="#9a9a9a" stroke-width="1.2" />
<line x1="1476.8" y1="213.8" x2="1476.8" y2="219.4" stroke="#9a9a9a" stroke-width="1.2" />
<line x1="1530.0" y1="213.8" x2="1530.0" y2="219.4" stroke="#9a9a9a" stroke-width="1.2" />
<line x1="1583.1" y1="213.8" x2="1583.1" y2="219.4" stroke="#9a9a9a" stroke-width="1.2" />
<line x1="1636.2" y1="213.8" x2="1636.2" y2="219.4" stroke="#9a9a9a" stroke-width="1.2" />
<line x1="1689.2" y1="213.8" x2="1689.2" y2="219.4" stroke="#9a9a9a" stroke-width="1.2" />
<rect x="639.8" y="215.6" width="1.4" height="1.6" fill="#9a9a9a" />
<rect x="666.4" y="215.6" width="1.4" height="1.6" fill="#9a9a9a" />
<rect x="692.9" y="215.6" width="1.4" height="1.6" fill="#9a9a9a" />
<rect x="719.5" y="215.6" width="1.4" height="1.6" fill="#9a9a9a" />
<rect x="746.0" y="215.6" width="1.4" height="1.6" fill="#9a9a9a" />
<rect x="772.6" y="215.6" width="1.4" height="1.6" fill="#9a9a9a" />
<rect x="799.1" y="215.6" width="1.4" height="1.6" fill="#9a9a9a" />
<rect x="825.7" y="215.6" width="1.4" height="1.6" fill="#9a9a9a" />
<rect x="852.2" y="215.6" width="1.4" height="1.6" fill="#9a9a9a" />
<rect x="878.8" y="215.6" width="1.4" height="1.6" fill="#9a9a9a" />
<rect x="905.3" y="215.6" width="1.4" height="1.6" fill="#9a9a9a" />
<rect x="931.9" y="215.6" width="1.4" height="1.6" fill="#9a9a9a" />
<rect x="958.4" y="215.6" width="1.4" height="1.6" fill="#9a9a9a" />
<rect x="985.0" y="215.6" width="1.4" height="1.6" fill="#9a9a9a" />
<rect x="1011.5" y="215.6" width="1.4" height="1.6" fill="#9a9a9a" />
<rect x="1038.1" y="215.6" width="1.4" height="1.6" fill="#9a9a9a" />
<rect x="1064.6" y="215.6" width="1.4" height="1.6" fill="#9a9a9a" />
<rect x="1091.2" y="215.6" width="1.4" height="1.6" fill="#9a9a9a" />
<rect x="1117.7" y="215.6" width="1.4" height="1.6" fill="#9a9a9a" />
<rect x="1144.3" y="215.6" width="1.4" height="1.6" fill="#9a9a9a" />
<rect x="1170.8" y="215.6" width="1.4" height="1.6" fill="#9a9a9a" />
<rect x="1197.4" y="215.6" width="1.4" height="1.6" fill="#9a9a9a" />
<rect x="1223.9" y="215.6" width="1.4" height="1.6" fill="#9a9a9a" />
<rect x="1250.5" y="215.6" width="1.4" height="1.6" fill="#9a9a9a" />
<rect x="1277.0" y="215.6" width="1.4" height="1.6" fill="#9a9a9a" />
<rect x="1303.6" y="215.6" width="1.4" height="1.6" fill="#9a9a9a" />
<rect x="1330.1" y="215.6" width="1.4" height="1.6" fill="#9a9a9a" />
<rect x="1356.7" y="215.6" width="1.4" height="1.6" fill="#9a9a9a" />
<rect x="1383.2" y="215.6" width="1.4" height="1.6" fill="#9a9a9a" />
<rect x="1409.8" y="215.6" width="1.4" height="1.6" fill="#9a9a9a" />
<rect x="1436.3" y="215.6" width="1.4" height="1.6" fill="#9a9a9a" />
<rect x="1462.9" y="215.6" width="1.4" height="1.6" fill="#9a9a9a" />
<rect x="1489.4" y="215.6" width="1.4" height="1.6" fill="#9a9a9a" />
<rect x="1516.0" y="215.6" width="1.4" height="1.6" fill="#9a9a9a" />
<rect x="1542.5" y="215.6" width="1.4" height="1.6" fill="#9a9a9a" />
<rect x="1569.1" y="215.6" width="1.4" height="1.6" fill="#9a9a9a" />
<rect x="1595.6" y="215.6" width="1.4" height="1.6" fill="#9a9a9a" />
<rect x="1622.2" y="215.6" width="1.4" height="1.6" fill="#9a9a9a" />
<rect x="1648.7" y="215.6" width="1.4" height="1.6" fill="#9a9a9a" />
<rect x="1675.3" y="215.6" width="1.4" height="1.6" fill="#9a9a9a" />
<rect x="1701.8" y="215.6" width="1.4" height="1.6" fill="#9a9a9a" />
<rect x="1728.4" y="215.6" width="1.4" height="1.6" fill="#9a9a9a" />
<polygon points="754.7,204.6 766.7,204.6 766.7,207.8 760.7,216.4 754.7,207.8" fill="#fff" stroke="#8a8a8a" stroke-width="1.2"/>
<polygon points="754.7,224.6 754.7,222 760.7,216.9 766.7,222 766.7,224.6" fill="#fff" stroke="#8a8a8a" stroke-width="1.2"/>
<rect x="754.7" y="224.6" width="12" height="9.2" fill="#fff" stroke="#8a8a8a" stroke-width="1.2"/>
<polygon points="1599.8,225.8 1599.8,221.4 1605.8,215.4 1611.8,221.4 1611.8,225.8" fill="#fff" stroke="#8a8a8a" stroke-width="1.2"/>
<defs><linearGradient id="sbg" x1="0" y1="0" x2="0" y2="1"><stop offset="0" stop-color="#f4f4f4"/><stop offset="1" stop-color="#eaeaea"/></linearGradient></defs>
<rect x="2116.8" y="201.0" width="22.2" height="791.0" fill="url(#sbg)" />
<rect x="2117.3" y="204.2" width="19.8" height="20.2" fill="#fff" stroke="#b4b4b4" stroke-width="1.2"/>
<polygon points="2122.2,216.6 2132.2,216.6 2127.2,211.0" fill="#777"/>
<rect x="2117.3" y="475.3" width="19.8" height="115.8" fill="#fff" stroke="#b4b4b4" stroke-width="1.2"/>
<rect x="2117.3" y="969.3" width="19.2" height="19.2" fill="#fff" stroke="#b4b4b4" stroke-width="1.2"/>
<polygon points="2121.8,976.3 2131.8,976.3 2126.8,981.5" fill="#777"/></g></svg></div>
<div class="region statusbar" style="left:219px;top:992px;width:1920px;height:31px;background:#2c59a0;"><svg width="1920" height="31" viewBox="219 992 1920 31"><g opacity="0.999"><text x="229.7" y="1012.8" font-size="15.4" fill="#eaf0fa" textLength="85.4" lengthAdjust="spacingAndGlyphs" stroke="#eaf0fa" stroke-width="0.3">PAGE 2 OF 3</text>
<text x="343.9" y="1012.8" font-size="15.4" fill="#eaf0fa" textLength="85.4" lengthAdjust="spacingAndGlyphs" stroke="#eaf0fa" stroke-width="0.3">705 WORDS</text>
<path d="M467 999.6 L465.6 998.5 H458.7 V1012.5 H465.6 L467 1013.7 L468.4 1012.5 H476.2 V1010.8 M467 999.6 L468.4 998.5 H476.2 V1000.6" fill="none" stroke="#eaf0fa" stroke-width="1.3" />
<path d="M467 999.6 V1015.6 M465.4 1013.8 L467 1015.7 L468.6 1013.8" fill="none" stroke="#eaf0fa" stroke-width="1.1" />
<path d="M470.9 1002.5 L476.9 1008.9 M476.9 1002.5 L470.9 1008.9" fill="none" stroke="#eaf0fa" stroke-width="1.8" />
<text x="502.2" y="1012.8" font-size="15.4" fill="#eaf0fa" textLength="113.7" lengthAdjust="spacingAndGlyphs" stroke="#eaf0fa" stroke-width="0.3">ENGLISH (INDIA)</text>
<circle cx="939.8" cy="1014" r="8" fill="#8f8f8f"/>
<circle cx="992.8" cy="1014" r="8" fill="#fff"/>
<circle cx="1045.9" cy="1014" r="8" fill="#8f8f8f"/>
<circle cx="1098.9" cy="1014" r="8" fill="#8f8f8f"/>
<circle cx="1152.0" cy="1014" r="8" fill="#8f8f8f"/>
<circle cx="1205.0" cy="1014" r="8" fill="#8f8f8f"/>
<circle cx="1258.1" cy="1014" r="8" fill="#8f8f8f"/>
<circle cx="1311.1" cy="1014" r="8" fill="#8f8f8f"/>
<circle cx="1364.2" cy="1014" r="8" fill="#8f8f8f"/>
<circle cx="1417.2" cy="1014" r="8" fill="#8f8f8f"/>
<rect x="1782.7" y="992.0" width="52.1" height="31.0" fill="#1f4788" />
<path d="M1745.4 998.6 H1753.6 L1754.6 999.8 L1755.6 998.6 H1763.8 V1013.2 H1755.6 L1754.6 1014.6 L1753.6 1013.2 H1745.4 Z" fill="none" stroke="#eaf0fa" stroke-width="1.2" />
<line x1="1747.2" y1="1001.4" x2="1752.6" y2="1001.4" stroke="#eaf0fa" stroke-width="1" />
<line x1="1756.6" y1="1001.4" x2="1762.0" y2="1001.4" stroke="#eaf0fa" stroke-width="1" />
<line x1="1747.2" y1="1003.8" x2="1752.6" y2="1003.8" stroke="#eaf0fa" stroke-width="1" />
<line x1="1756.6" y1="1003.8" x2="1762.0" y2="1003.8" stroke="#eaf0fa" stroke-width="1" />
<line x1="1747.2" y1="1006.2" x2="1752.6" y2="1006.2" stroke="#eaf0fa" stroke-width="1" />
<line x1="1756.6" y1="1006.2" x2="1762.0" y2="1006.2" stroke="#eaf0fa" stroke-width="1" />
<line x1="1747.2" y1="1008.6" x2="1752.6" y2="1008.6" stroke="#eaf0fa" stroke-width="1" />
<line x1="1756.6" y1="1008.6" x2="1762.0" y2="1008.6" stroke="#eaf0fa" stroke-width="1" />
<line x1="1747.2" y1="1011.0" x2="1752.6" y2="1011.0" stroke="#eaf0fa" stroke-width="1" />
<line x1="1756.6" y1="1011.0" x2="1762.0" y2="1011.0" stroke="#eaf0fa" stroke-width="1" />
<line x1="1754.6" y1="999.8" x2="1754.6" y2="1015.4" stroke="#eaf0fa" stroke-width="1.2" />
<path d="M1799 998.2 H1818 V1015 H1799 Z" fill="none" stroke="#eaf0fa" stroke-width="1.3" />
<line x1="1801.2" y1="1001.3" x2="1815.8" y2="1001.3" stroke="#eaf0fa" stroke-width="1.3" />
<line x1="1801.2" y1="1004.0" x2="1815.8" y2="1004.0" stroke="#eaf0fa" stroke-width="1.3" />
<line x1="1801.2" y1="1006.7" x2="1815.8" y2="1006.7" stroke="#eaf0fa" stroke-width="1.3" />
<line x1="1801.2" y1="1009.4" x2="1815.8" y2="1009.4" stroke="#eaf0fa" stroke-width="1.3" />
<line x1="1801.2" y1="1012.1" x2="1815.8" y2="1012.1" stroke="#eaf0fa" stroke-width="1.3" />
<path d="M1861 1012 H1852.4 V998.2 H1868.8 V1004" fill="none" stroke="#eaf0fa" stroke-width="1.3" />
<line x1="1854.6" y1="1001.2" x2="1866.2" y2="1001.2" stroke="#eaf0fa" stroke-width="1.2" />
<line x1="1854.6" y1="1003.8" x2="1866.2" y2="1003.8" stroke="#eaf0fa" stroke-width="1.2" />
<line x1="1854.6" y1="1006.4" x2="1866.2" y2="1006.4" stroke="#eaf0fa" stroke-width="1.2" />
<line x1="1854.6" y1="1009.0" x2="1860.0" y2="1009.0" stroke="#eaf0fa" stroke-width="1.2" />
<circle cx="1866.6" cy="1010.4" r="5.2" fill="#dfe8f5"/>
<path d="M1863.5 1008 C1865.5 1008.5 1866 1011 1864.6 1013.5 M1868 1006.5 C1867.4 1008.6 1869.4 1010 1870.8 1009.4" fill="none" stroke="#2b579a" stroke-width="1.3" />
<rect x="1895.7" y="1005.2" width="8.2" height="2.8" fill="#eaf0fa" />
<line x1="1909.8" y1="1006.6" x2="2050.0" y2="1006.6" stroke="#eaf0fa" stroke-width="1.3" />
<rect x="1977.4" y="998.9" width="5.0" height="15.3" fill="#fff" />
<rect x="2056.0" y="1005.6" width="11.2" height="2.8" fill="#eaf0fa" />
<rect x="2060.2" y="1001.5" width="2.8" height="11.1" fill="#eaf0fa" />
<text x="2089.7" y="1012.8" font-size="15.4" fill="#eaf0fa" textLength="36.3" lengthAdjust="spacingAndGlyphs" stroke="#eaf0fa" stroke-width="0.3">100%</text></g></svg></div>
<div class="region taskbar" style="left:219px;top:1023px;width:1920px;height:57px;background:linear-gradient(90deg,#20323d 0%,#1f303b 55%,#19263a 80%,#17233a 100%);"><svg width="1920" height="57" viewBox="219 1023 1920 57"><g opacity="0.999"><rect x="245.0" y="1039.5" width="11.2" height="11.2" fill="#fff" />
<rect x="257.4" y="1039.5" width="11.2" height="11.2" fill="#fff" />
<rect x="245.0" y="1051.9" width="11.2" height="11.2" fill="#fff" />
<rect x="257.4" y="1051.9" width="11.2" height="11.2" fill="#fff" />
<rect x="286.3" y="1023.0" width="483.4" height="55.2" fill="#f2f2f2" />
<circle cx="317.2" cy="1046.4" r="7.2" fill="none" stroke="#333" stroke-width="1.6"/>
<line x1="312.2" y1="1051.8" x2="305.5" y2="1059.0" stroke="#333" stroke-width="1.8" />
<text x="343.4" y="1059.2" font-size="20.5" fill="#4c4c4c" textLength="178.4" lengthAdjust="spacingAndGlyphs">Type here to search</text>
<circle cx="803.6" cy="1050.7" r="9.5" fill="none" stroke="#fff" stroke-width="2.4"/>
<path d="M860.8 1039.5 V1060.7 M874.6 1039.5 V1060.7 M860 1043.5 H875.4 M860 1056.9 H875.4" fill="none" stroke="#fff" stroke-width="1.8" />
<line x1="880.5" y1="1039.5" x2="880.5" y2="1044.0" stroke="#fff" stroke-width="1.6" />
<rect x="878.4" y="1045.3" width="4.2" height="3.9" fill="#fff" />
<line x1="880.5" y1="1050.6" x2="880.5" y2="1060.7" stroke="#fff" stroke-width="1.6" />
<defs><radialGradient id="ffg" cx="0.62" cy="0.2" r="0.95"><stop offset="0" stop-color="#fff36b"/><stop offset="0.35" stop-color="#ff9a2a"/><stop offset="0.7" stop-color="#ff3a55"/><stop offset="1" stop-color="#c0208a"/></radialGradient><radialGradient id="ffp" cx="0.5" cy="0.5" r="0.6"><stop offset="0" stop-color="#9059ff"/><stop offset="1" stop-color="#5b2fc0"/></radialGradient></defs>
<circle cx="942.8" cy="1052.5" r="14.8" fill="url(#ffg)"/>
<path d="M946.8 1033.8 C952.3 1038 957.4 1044 957.5999999999999 1052.5 L951.8 1047.5 C949.8 1042.5 945.8 1040.5 943.3 1040 C945.5999999999999 1037.8 946.8 1035.6 946.8 1033.8 Z" fill="#ffe03c" />
<path d="M929.3 1044 C930.8 1040 933.8 1038 935.8 1037 C935.8 1040 937.8 1042 939.8 1043 Z" fill="#ff8a2a" />
<circle cx="941.5999999999999" cy="1051.5" r="7.2" fill="url(#ffp)"/>
<path d="M933.8 1048 C938.8 1045 944.8 1046 946.8 1050 C942.8 1049 939.8 1051 939.8 1054 C939.8 1058 945.8 1059 948.8 1056 C946.8 1062 936.8 1063 932.8 1056 Z" fill="#ff7a1e" />
<defs><linearGradient id="edg" x1="0" y1="0.2" x2="1" y2="0.5"><stop offset="0" stop-color="#2fb4ee"/><stop offset="0.45" stop-color="#35c4d8"/><stop offset="1" stop-color="#62dc4e"/></linearGradient><linearGradient id="edg2" x1="0" y1="0" x2="0.6" y2="1"><stop offset="0" stop-color="#1f9bf0"/><stop offset="0.6" stop-color="#0f6ed2"/><stop offset="1" stop-color="#0c55a8"/></linearGradient></defs>
<circle cx="1011.9" cy="1050.9" r="16.8" fill="url(#edg)"/>
<path d="M995.1999999999999 1049.9 C997.4 1041.4 1005.9 1039.9 1011.4 1044.4 C1015.4 1047.9 1014.4 1051.9 1012.4 1053.9 C1010.4 1056.9 1013.9 1059.9 1019.9 1058.9 C1023.9 1058.4 1026.9 1056.4 1028.3 1053.9 C1027.4 1062.9 1019.4 1067.9 1011.9 1067.7 C1001.9 1067.7 994.4 1059.9 995.1999999999999 1049.9 Z" fill="url(#edg2)" />
<path d="M1004.9 1045.4 C1009.4 1042.4 1014.9 1046.9 1013.4 1051.4 C1011.4 1055.4 1012.9 1059.9 1018.9 1060.4 C1012.4 1063.4 1001.4 1056.9 1004.9 1045.4 Z" fill="#0b4a98" />
<path d="M1008.4 1047.4 C1011.4 1045.9 1013.9 1048.9 1012.4 1051.7 C1011.1 1053.5 1011.1 1055.3000000000002 1011.9 1056.5 C1008.3 1055.1000000000001 1006.3 1050.5 1008.4 1047.4 Z" fill="#1d3040" />
<path d="M1065.5 1039.5 H1076 L1078.5 1042 H1095.8 V1063.2 H1065.5 Z" fill="#e9b52e" />
<path d="M1065.5 1045.5 H1095.8 V1063.2 H1065.5 Z" fill="#f8d667" />
<path d="M1072.5 1063.2 V1053.6 H1088.8 V1063.2 Z" fill="#3f9be0" />
<path d="M1076.4 1063.2 V1058.4 H1085 V1063.2 Z" fill="#f8d667" />
<path d="M1141 1044 V1037.6 C1141 1035.4 1156.6 1035.4 1156.6 1037.6 V1044" fill="none" stroke="#e2e2e2" stroke-width="2.3" />
<rect x="1132.6" y="1042.4" width="32.6" height="25.4" fill="#f2f2f2" />
<rect x="1142.3" y="1049.4" width="5.8" height="5.8" fill="#f25022" />
<rect x="1149.6" y="1049.4" width="5.8" height="5.8" fill="#7fba00" />
<rect x="1142.3" y="1056.7" width="5.8" height="5.8" fill="#00a4ef" />
<rect x="1149.6" y="1056.7" width="5.8" height="5.8" fill="#ffb900" />
<path d="M1200.6 1046 L1218 1035.2 L1235.6 1046 V1065.6 H1200.6 Z" fill="#1177c8" />
<path d="M1200.6 1046.4 H1235.6 V1065.6 H1200.6 Z" fill="#2a9df0" />
<path d="M1203 1046.4 H1233.2 L1218 1058.5 Z" fill="#fff" />
<ellipse cx="1236.3" cy="1060.6" rx="12.6" ry="11.8" fill="#2d3947" stroke="#d8d8d8" stroke-width="1.3"/>
<text x="1228.3" y="1066.2" font-size="15" fill="#fff" textLength="16.3" lengthAdjust="spacingAndGlyphs">18</text>
<defs><linearGradient id="npg" x1="0" y1="0" x2="0" y2="1"><stop offset="0" stop-color="#f4f8ea"/><stop offset="0.45" stop-color="#bfe28a"/><stop offset="1" stop-color="#4eb02b"/></linearGradient></defs>
<path d="M1272 1036 H1290 L1297 1043 V1067 H1272 Z" fill="url(#npg)" stroke="#9aa88a" stroke-width="0.8" />
<path d="M1276 1054.5 V1045.5 H1279.8 V1054.5 M1282.5 1051.5 H1285.5 M1287.5 1051.5 H1290.5" fill="none" stroke="#2f4a1e" stroke-width="1.6" />
<path d="M1299.5 1036.5 L1302 1038.5 L1288 1059.5 L1284.6 1061.6 L1285.4 1057.6 Z" fill="#f2b43a" />
<circle cx="1356" cy="1050.8" r="16" fill="#fff"/>
<path d="M1356 1050.8 L1342.14 1042.80 A16 16 0 0 1 1369.86 1042.80 Z" fill="#e8453c" />
<path d="M1356 1050.8 L1369.86 1042.80 A16 16 0 0 1 1356.00 1066.80 Z" fill="#fbc116" />
<path d="M1356 1050.8 L1356.00 1066.80 A16 16 0 0 1 1342.14 1042.80 Z" fill="#2da94f" />
<path d="M1362.9 1046.8 L1369.86 1042.80 L1362.9 1046.8 Z" fill="#e8453c" />
<path d="M1349.1 1046.8 H1369.8 L1369.86 1042.80 A16 16 0 0 0 1342.14 1042.80 Z" fill="#e8453c" />
<circle cx="1356" cy="1050.8" r="7.6" fill="#fff"/>
<circle cx="1356" cy="1050.8" r="5.9" fill="#4a8af4"/>
<rect x="1409.3" y="1035.0" width="31.4" height="31.6" fill="#2d8cff" rx="9.5"/>
<rect x="1415.6" y="1045.4" width="12.6" height="10.8" fill="#fff" rx="2.4"/>
<path d="M1429.4 1049 L1435 1045.8 V1055.8 L1429.4 1052.6 Z" fill="#fff" />
<rect x="1476.8" y="1033.7" width="34.7" height="34.2" fill="#fdfdfd" />
<path d="M1494.6 1044.4 C1491 1041.8 1483.6 1043.2 1482.6 1051 C1481.8 1058 1486.6 1064.8 1490.4 1064.8 C1492.4 1064.8 1493.4 1063.8 1495.4 1063.8 C1497.4 1063.8 1498.2 1064.8 1500.4 1064.8 C1503.8 1064.8 1506.6 1059.8 1507.2 1057.4 C1503.2 1055.8 1502.4 1049.6 1506.4 1047.2 C1504 1043.4 1498.4 1042.6 1494.6 1044.4 Z" fill="#141414" />
<path d="M1494.8 1043.6 C1494.6 1039.8 1497.6 1036.8 1500.8 1036.4 C1501.2 1040 1498.2 1043.4 1494.8 1043.6 Z" fill="#141414" />
<text x="1486.5" y="1055.6" font-size="3.4" fill="#aaa" textLength="17.0" lengthAdjust="spacingAndGlyphs">Software</text>
<path d="M1559 1039 H1578.6 V1062.4 H1559 Z" fill="#fbe3dc" stroke="#d24625" stroke-width="1" />
<circle cx="1569.2" cy="1046" r="4.3" fill="#d24625"/>
<line x1="1564.0" y1="1054.4" x2="1576.0" y2="1054.4" stroke="#d24625" stroke-width="1.7" />
<line x1="1564.0" y1="1058.0" x2="1576.0" y2="1058.0" stroke="#d24625" stroke-width="1.7" />
<path d="M1546.6 1038.2 L1564.8 1035 V1066.1 L1546.6 1062.9 Z" fill="#d24625" />
<text x="1550.6" y="1056.6" font-size="16.5" fill="#fff" textLength="10.0" lengthAdjust="spacingAndGlyphs" font-weight="bold">P</text>
<rect x="1597.9" y="1022.6" width="67.5" height="57.4" fill="#48525f" />
<path d="M1628.4 1038.3 H1646.4 V1062.3 H1628.4 Z" fill="#fff" stroke="#2b579a" stroke-width="1" />
<line x1="1634.9" y1="1042.3" x2="1644.4" y2="1042.3" stroke="#2b579a" stroke-width="1.6" />
<line x1="1634.9" y1="1045.5" x2="1644.4" y2="1045.5" stroke="#2b579a" stroke-width="1.6" />
<line x1="1634.9" y1="1048.7" x2="1644.4" y2="1048.7" stroke="#2b579a" stroke-width="1.6" />
<line x1="1634.9" y1="1051.9" x2="1644.4" y2="1051.9" stroke="#2b579a" stroke-width="1.6" />
<line x1="1634.9" y1="1055.1" x2="1644.4" y2="1055.1" stroke="#2b579a" stroke-width="1.6" />
<line x1="1634.9" y1="1058.3" x2="1644.4" y2="1058.3" stroke="#2b579a" stroke-width="1.6" />
<path d="M1615.4 1038.0 L1633.6000000000001 1034.8 V1065.8 L1615.4 1062.6 Z" fill="#2b579a" />
<text x="1617.8" y="1056.3" font-size="15.5" fill="#fff" textLength="13.2" lengthAdjust="spacingAndGlyphs" font-weight="bold">W</text>
<rect x="1327.7" y="1076.2" width="56.6" height="3.2" fill="#76b9ed" />
<rect x="1396.8" y="1076.2" width="43.9" height="3.2" fill="#76b9ed" />
<rect x="1465.9" y="1076.2" width="43.6" height="3.2" fill="#76b9ed" />
<rect x="1534.3" y="1076.2" width="56.6" height="3.2" fill="#76b9ed" />
<rect x="1597.9" y="1076.2" width="67.5" height="3.2" fill="#76b9ed" />
<rect x="1440.7" y="1076.2" width="12.5" height="3.2" fill="#5a87ad" />
<rect x="1509.5" y="1076.2" width="12.3" height="3.2" fill="#5a87ad" />
<path d="M1823.6 1055 L1831.3 1047.3 L1839 1055" fill="none" stroke="#fff" stroke-width="1.7" />
<rect x="1857.4" y="1043.4" width="18.0" height="12.2" fill="none" stroke="#fff" stroke-width="1.5"/>
<rect x="1854.0" y="1046.0" width="5.6" height="5.0" fill="#18243a" stroke="#fff" stroke-width="1.2"/>
<path d="M1856.8 1051 V1059.8 H1872 M1866.4 1055.6 V1059.8" fill="none" stroke="#fff" stroke-width="1.5" />
<path d="M1888 1047.6 H1891.4 L1896 1043 V1059.4 L1891.4 1054.8 H1888 Z" fill="none" stroke="#fff" stroke-width="1.4" />
<path d="M1899.2 1048.4 C1900.8 1050 1900.8 1052.6 1899.2 1054.2 M1902.4 1045.6 C1905.4 1048.8 1905.4 1053.8 1902.4 1057 M1905.8 1042.8 C1910.2 1047.6 1910.2 1055 1905.8 1059.8" fill="none" stroke="#fff" stroke-width="1.4" />
<text x="1924.3" y="1056.0" font-size="16.5" fill="#fff" textLength="31.5" lengthAdjust="spacingAndGlyphs">ENG</text>
<text x="1995.5" y="1043.3" font-size="16.5" fill="#fff" textLength="37.8" lengthAdjust="spacingAndGlyphs">08:58</text>
<text x="1976.0" y="1068.7" font-size="16.5" fill="#fff" textLength="78.0" lengthAdjust="spacingAndGlyphs">10-03-2021</text>
<path d="M2081.6 1040.2 H2103.8 V1056.6 H2090.6 L2086.4 1060.4 V1056.6 H2081.6 Z" fill="#fff" />
<line x1="2085.0" y1="1044.6" x2="2100.4" y2="1044.6" stroke="#18243a" stroke-width="1.3" />
<line x1="2085.0" y1="1048.4" x2="2100.4" y2="1048.4" stroke="#18243a" stroke-width="1.3" />
<line x1="2085.0" y1="1052.2" x2="2100.4" y2="1052.2" stroke="#18243a" stroke-width="1.3" />
<ellipse cx="2103" cy="1061.2" rx="14.2" ry="12" fill="#3a3f4a" stroke="#8a8f98" stroke-width="1.2"/>
<text x="2093.6" y="1066.4" font-size="15.4" fill="#fff" textLength="18.0" lengthAdjust="spacingAndGlyphs">23</text>
<line x1="2132.8" y1="1023.0" x2="2132.8" y2="1080.0" stroke="#59606c" stroke-width="1.3" /></g></svg></div>
<div class="region overlay" style="left:0px;top:1022px;width:500px;height:58px;background:rgba(0,0,0,0.5);"><svg width="500" height="58" viewBox="0 1022 500 58"><g opacity="0.999"><text x="90.6" y="1067.0" font-size="41.5" fill="#fff" textLength="107.6" lengthAdjust="spacingAndGlyphs">user2</text>
<text x="205.2" y="1067.0" font-size="41.5" fill="#fff" textLength="153.0" lengthAdjust="spacingAndGlyphs">NMFC's</text>
<text x="363.6" y="1067.0" font-size="41.5" fill="#fff" textLength="124.4" lengthAdjust="spacingAndGlyphs">screen</text></g></svg></div>

</body></html>
